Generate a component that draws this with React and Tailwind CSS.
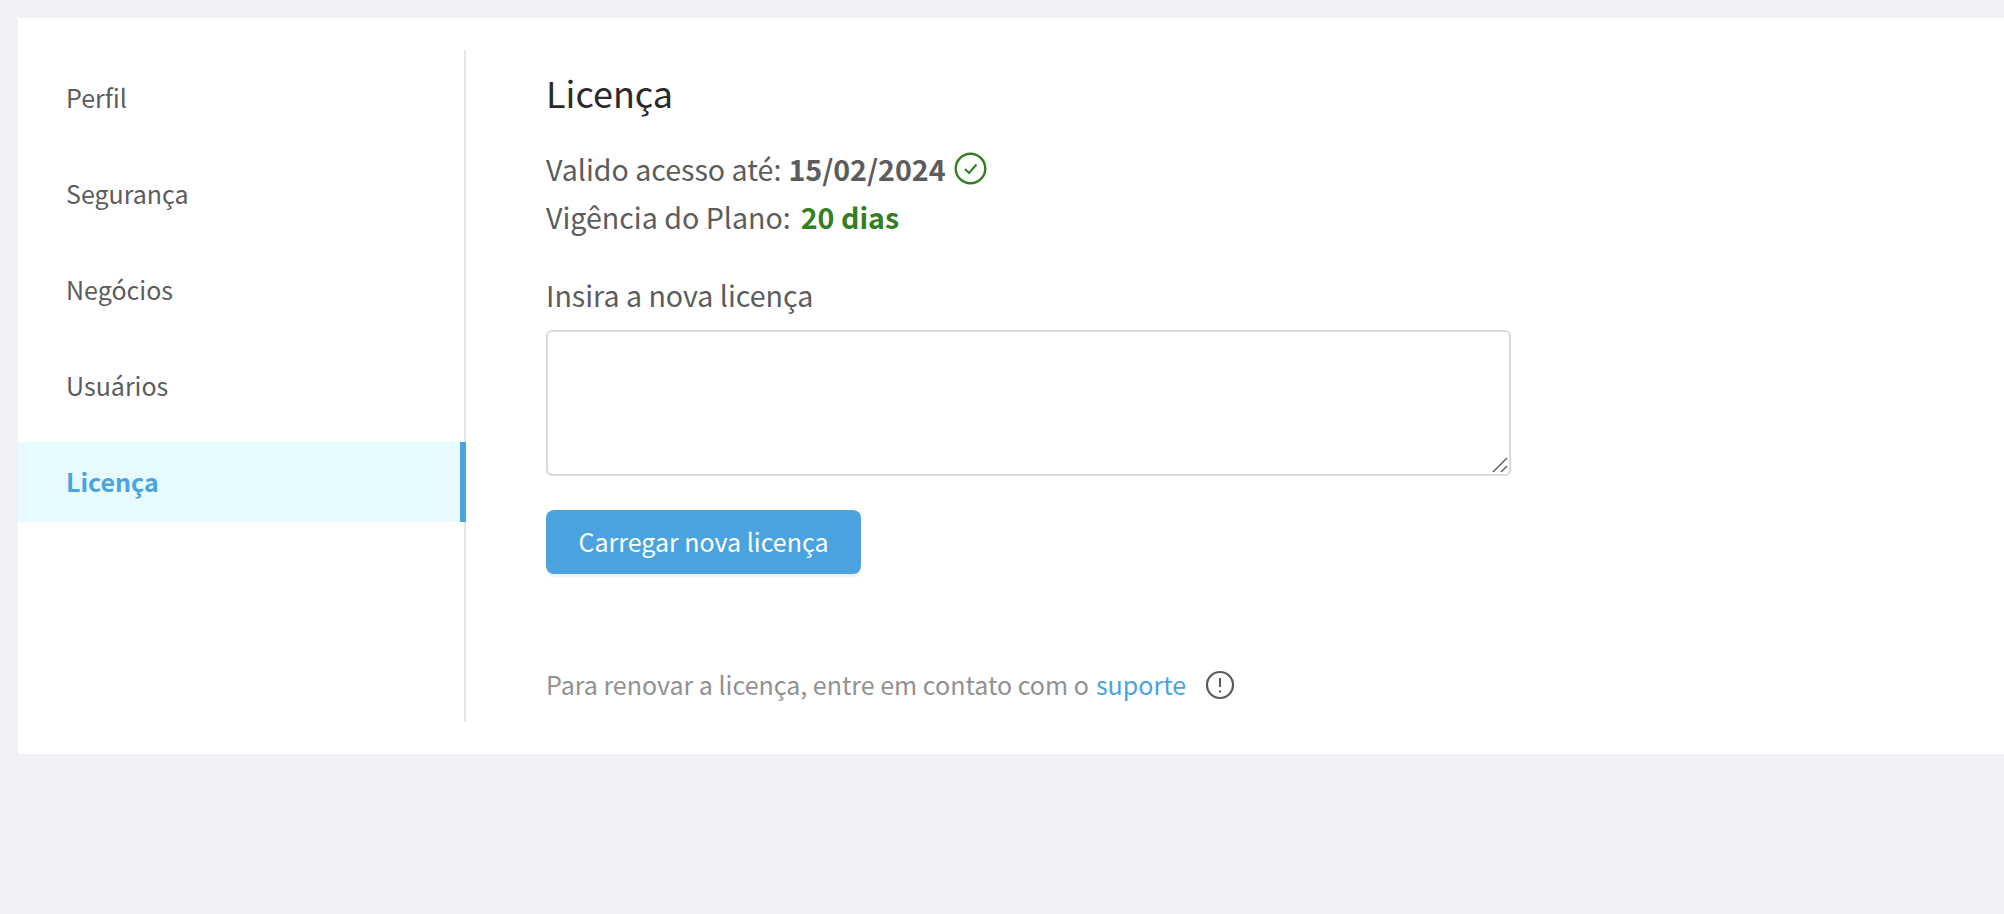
import React from "react";

const font = "font-['Noto_Sans_CJK_SC','Noto_Sans',sans-serif]";

const menuItems = ["Perfil", "Segurança", "Negócios", "Usuários", "Licença"];

const CheckIcon = () => (
  <svg width="33" height="33" viewBox="0 0 33 33" fill="none" stroke="#347f22" strokeWidth="2.4" className="ml-[8px] mt-[-2px]">
    <circle cx="16.5" cy="16.5" r="14.8" />
    <path d="M11 17l4 4 7.5-8.5" strokeWidth="2" />
  </svg>
);

const AlertIcon = () => (
  <svg width="30" height="30" viewBox="0 0 30 30" fill="none" stroke="#5a5a5a" strokeWidth="2.2" className="ml-[19px]">
    <circle cx="15" cy="15" r="13" />
    <path d="M15 8v9" strokeWidth="2" />
    <path d="M15 20.5v2" strokeWidth="2.2" />
  </svg>
);

const App = () => {
  return (
    <div className={`${font} min-h-[914px] bg-[#f0f2f6] pt-[18px] pl-[18px]`}>
      <div className="flex h-[736px] bg-white pt-[32px]">
        <nav className="h-[672px] w-[448px] border-r-2 border-[#e6e6e6] pt-[8px]">
          <ul className="flex flex-col gap-[16px]">
            {menuItems.map((item) => (
              <li
                key={item}
                className={
                  item === "Licença"
                    ? "mr-[-2px] flex h-[80px] items-center border-r-[6px] border-[#4aa3df] bg-[#e6faff] pl-[48px] text-[25px] font-bold text-[#4aa3df]"
                    : "flex h-[80px] items-center pl-[48px] text-[25px] text-[#5c5c5c]"
                }
              >
                {item}
              </li>
            ))}
          </ul>
        </nav>

        <main className="pl-[80px]">
          <h1 className="mt-[14px] h-[56px] text-[36px] leading-[56px] font-normal text-[#2a2a2a]">Licença</h1>
          <div className="mt-[25px] flex h-[48px] items-center text-[28.6px] leading-[48px] text-[#5c5c5c]">
            <span>Valido acesso até:</span>
            <strong className="ml-[7px] font-bold">15/02/2024</strong>
            <CheckIcon />
          </div>
          <div className="flex h-[48px] items-center text-[28.6px] leading-[48px] text-[#5c5c5c]">
            <span>Vigência do Plano:</span>
            <strong className="ml-[10px] font-bold text-[#347f22]">20 dias</strong>
          </div>

          <label className="mt-[30px] block h-[48px] text-[28.6px] leading-[48px] text-[#5c5c5c]">Insira a nova licença</label>
          <div className="relative mt-[11px] h-[146px] w-[965px]">
            <textarea className="block h-full w-full resize-none rounded-[6px] border-2 border-[#dadada] bg-white" />
            <svg width="16" height="16" viewBox="0 0 16 16" stroke="#5c5c5c" strokeWidth="1.5" className="absolute right-[3px] bottom-[3px]">
              <path d="M1 15L15 1" />
              <path d="M9 15l6-6" />
            </svg>
          </div>

          <button className="mt-[34px] block h-[64px] w-[315px] rounded-[8px] bg-[#4aa3df] text-[25px] text-white shadow-[0_3px_0_#f0f0f0]">
            Carregar nova licença
          </button>

          <div className="mt-[91px] flex h-[40px] items-center text-[25px] text-[#919191]">
            <span>Para renovar a licença, entre em contato com o</span>
            <a className="ml-[7px] text-[#4aa3df]">suporte</a>
            <AlertIcon />
          </div>
        </main>
      </div>
    </div>
  );
};

export default App;
